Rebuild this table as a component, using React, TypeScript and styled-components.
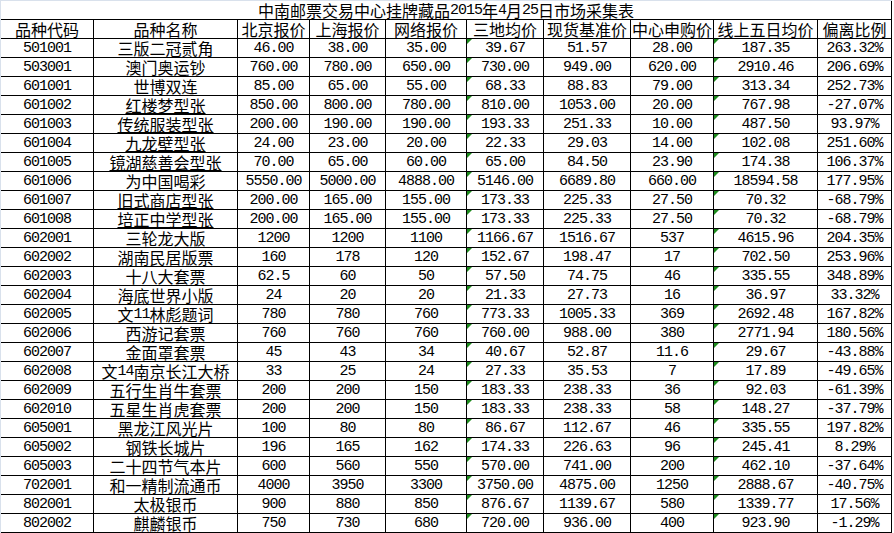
import React from "react";
import styled, { createGlobalStyle, css } from "styled-components";

const GlobalStyle = createGlobalStyle`
  html, body {
    margin: 0;
    padding: 0;
    background: #fff;
  }
`;

const Sheet = styled.div`
  display: grid;
  grid-template-columns: 93px 144px 72px 76px 81px 77px 87px 83px 104px 74px;
  grid-auto-rows: 19px;
  width: fit-content;
  border-top: 1px solid #d9e1ec;
  border-left: 1px solid #d9e1ec;
  font-family: "Noto Sans CJK SC", sans-serif;
  font-size: 16px;
  color: #000;
`;

const Title = styled.div`
  grid-column: 1 / -1;
  display: flex;
  align-items: center;
  justify-content: center;
  border-right: 1px solid #000;
  border-bottom: 1px solid #000;
  line-height: 18px;
  white-space: nowrap;
`;

const Cell = styled.div<{ $flag?: boolean; $link?: boolean }>`
  position: relative;
  display: flex;
  align-items: center;
  justify-content: center;
  border-right: 1px solid #000;
  border-bottom: 1px solid #000;
  line-height: 18px;
  white-space: nowrap;
  ${(p) =>
    p.$link &&
    css`
      text-decoration: underline;
      text-underline-offset: 1px;
    `}
  ${(p) =>
    p.$flag &&
    css`
      &::before {
        content: "";
        position: absolute;
        top: 0;
        left: 0;
        width: 0;
        height: 0;
        border-top: 5px solid #1e8c1e;
        border-right: 5px solid transparent;
      }
    `}
`;

const Latin = styled.span`
  font-family: "Liberation Mono", monospace;
  font-size: 15px;
  line-height: 1;
  letter-spacing: -1px;
`;

const headers = [
  "品种代码",
  "品种名称",
  "北京报价",
  "上海报价",
  "网络报价",
  "三地均价",
  "现货基准价",
  "中心申购价",
  "线上五日均价",
  "偏离比例",
];

// code, name, bj, sh, web, avg3, spot, center, avg5, deviation
const rows: string[][] = [
  ["501001", "三版二冠贰角", "46.00", "38.00", "35.00", "39.67", "51.57", "28.00", "187.35", "263.32%"],
  ["503001", "澳门奥运钞", "760.00", "780.00", "650.00", "730.00", "949.00", "620.00", "2910.46", "206.69%"],
  ["601001", "世博双连", "85.00", "65.00", "55.00", "68.33", "88.83", "79.00", "313.34", "252.73%"],
  ["601002", "红楼梦型张", "850.00", "800.00", "780.00", "810.00", "1053.00", "20.00", "767.98", "-27.07%"],
  ["601003", "传统服装型张", "200.00", "190.00", "190.00", "193.33", "251.33", "10.00", "487.50", "93.97%"],
  ["601004", "九龙壁型张", "24.00", "23.00", "20.00", "22.33", "29.03", "14.00", "102.08", "251.60%"],
  ["601005", "镜湖慈善会型张", "70.00", "65.00", "60.00", "65.00", "84.50", "23.90", "174.38", "106.37%"],
  ["601006", "为中国喝彩", "5550.00", "5000.00", "4888.00", "5146.00", "6689.80", "660.00", "18594.58", "177.95%"],
  ["601007", "旧式商店型张", "200.00", "165.00", "155.00", "173.33", "225.33", "27.50", "70.32", "-68.79%"],
  ["601008", "培正中学型张", "200.00", "165.00", "155.00", "173.33", "225.33", "27.50", "70.32", "-68.79%"],
  ["602001", "三轮龙大版", "1200", "1200", "1100", "1166.67", "1516.67", "537", "4615.96", "204.35%"],
  ["602002", "湖南民居版票", "160", "178", "120", "152.67", "198.47", "17", "702.50", "253.96%"],
  ["602003", "十八大套票", "62.5", "60", "50", "57.50", "74.75", "46", "335.55", "348.89%"],
  ["602004", "海底世界小版", "24", "20", "20", "21.33", "27.73", "16", "36.97", "33.32%"],
  ["602005", "文11林彪题词", "780", "780", "760", "773.33", "1005.33", "369", "2692.48", "167.82%"],
  ["602006", "西游记套票", "760", "760", "760", "760.00", "988.00", "380", "2771.94", "180.56%"],
  ["602007", "金面罩套票", "45", "43", "34", "40.67", "52.87", "11.6", "29.67", "-43.88%"],
  ["602008", "文14南京长江大桥", "33", "25", "24", "27.33", "35.53", "7", "17.89", "-49.65%"],
  ["602009", "五行生肖牛套票", "200", "200", "150", "183.33", "238.33", "36", "92.03", "-61.39%"],
  ["602010", "五星生肖虎套票", "200", "200", "150", "183.33", "238.33", "58", "148.27", "-37.79%"],
  ["605001", "黑龙江风光片", "100", "80", "80", "86.67", "112.67", "46", "335.55", "197.82%"],
  ["605002", "钢铁长城片", "196", "165", "162", "174.33", "226.63", "96", "245.41", "8.29%"],
  ["605003", "二十四节气本片", "600", "560", "550", "570.00", "741.00", "200", "462.10", "-37.64%"],
  ["702001", "和一精制流通币", "4000", "3950", "3300", "3750.00", "4875.00", "1250", "2888.67", "-40.75%"],
  ["802001", "太极银币", "900", "880", "850", "876.67", "1139.67", "580", "1339.77", "17.56%"],
  ["802002", "麒麟银币", "750", "730", "680", "720.00", "936.00", "400", "923.90", "-1.29%"],
];

// split ascii runs out so digits get the narrow mono face
function renderText(text: string) {
  return text.split(/([\x20-\x7e]+)/).map((part, i) =>
    /^[\x20-\x7e]+$/.test(part) ? <Latin key={i}>{part}</Latin> : part
  );
}

function App() {
  return (
    <>
      <GlobalStyle />
      <Sheet>
        <Title>{renderText("中南邮票交易中心挂牌藏品2015年4月25日市场采集表")}</Title>
        {headers.map((h) => (
          <Cell key={h}>{h}</Cell>
        ))}
        {rows.map((row) =>
          row.map((value, col) => (
            <Cell
              key={row[0] + col}
              $flag={col === 5 || col === 8}
              $link={col === 1 && value.endsWith("型张")}
            >
              {renderText(value)}
            </Cell>
          ))
        )}
      </Sheet>
    </>
  );
}

export default App;
